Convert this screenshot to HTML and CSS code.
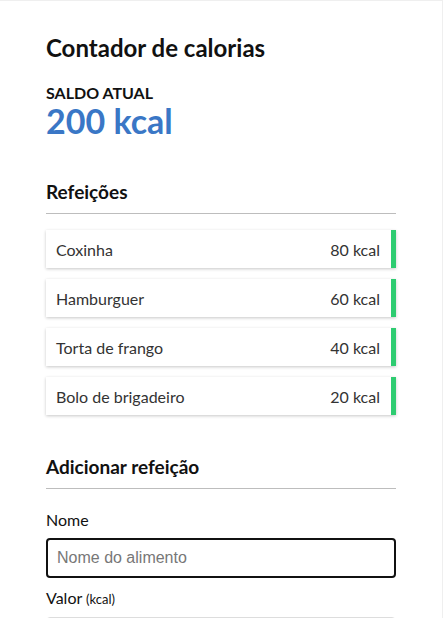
FILE: index.html
```html
<!DOCTYPE html>
<html lang="pt-BR">
<head>
<meta charset="utf-8">
<title>Contador de calorias</title>
<link rel="stylesheet" href="styles.css">
</head>
<body>
<div class="page">
  <h1 class="title">Contador de calorias</h1>
  <div class="balance">
    <div class="balance-label">SALDO ATUAL</div>
    <div class="balance-value">200 kcal</div>
  </div>
  <h2 class="section-title">Refeições</h2>
  <ul class="meals">
    <li class="meal"><span>Coxinha</span><span>80 kcal</span></li>
    <li class="meal"><span>Hamburguer</span><span>60 kcal</span></li>
    <li class="meal"><span>Torta de frango</span><span>40 kcal</span></li>
    <li class="meal"><span>Bolo de brigadeiro</span><span>20 kcal</span></li>
  </ul>
  <h2 class="section-title">Adicionar refeição</h2>
  <form class="form">
    <label class="label" for="nome">Nome</label>
    <input class="input input-focus" id="nome" type="text" placeholder="Nome do alimento">
    <label class="label" for="valor">Valor <small>(kcal)</small></label>
    <input class="input input-plain" id="valor" type="number">
  </form>
</div>
</body>
</html>
```
FILE: styles.css
```css
html, body {
  margin: 0;
  padding: 0;
  background: #fff;
}
body {
  font-family: Lato, "Liberation Sans", sans-serif;
  color: #111;
  height: 618px;
  overflow: hidden;
  box-sizing: border-box;
  border-top: 1px solid #efefef;
  border-right: 1px solid #efefef;
}
.page {
  padding: 32px 46px 0 46px;
  display: flex;
  flex-direction: column;
}
.title {
  margin: 0;
  font-size: 24px;
  font-weight: 700;
  line-height: 30px;
}
.balance {
  margin-top: 20px;
}
.balance-label {
  font-size: 16px;
  font-weight: 700;
  line-height: 19px;
}
.balance-value {
  margin-top: 2px;
  font-size: 34px;
  font-weight: 700;
  color: #3a77c6;
  line-height: 34px;
}
.section-title {
  margin: 42px 0 0 0;
  font-size: 19px;
  font-weight: 700;
  line-height: 23px;
  padding-bottom: 10px;
  border-bottom: 1px solid #bdbdbd;
}
.meals {
  list-style: none;
  margin: 16px 0 0 0;
  padding: 0;
  display: flex;
  flex-direction: column;
  gap: 11px;
}
.meal {
  height: 38px;
  box-sizing: border-box;
  display: flex;
  align-items: center;
  justify-content: space-between;
  padding: 0 11px 0 10px;
  border-right: 5px solid #2ecc71;
  box-shadow: 0 1px 3px rgba(0,0,0,0.22);
  font-size: 16px;
  color: #333;
  background: #fff;
}
.meals + .section-title {
  margin-top: 40px;
}
.form {
  display: flex;
  flex-direction: column;
  margin-top: 21px;
}
.label {
  font-size: 16px;
  line-height: 20px;
  color: #111;
}
.label small {
  font-size: 13px;
}
.input {
  box-sizing: border-box;
  height: 40px;
  margin: 8px 0 10px;
  padding: 0 9px;
  border: 1px solid #ccc;
  border-radius: 4px;
  font-family: "Liberation Sans", Arial, sans-serif;
  font-size: 16px;
  width: 100%;
}
.input::placeholder {
  color: #777;
}
.input-focus {
  border: 2px solid #111;
  outline: none;
}
.input-plain {
  border-color: #ddd;
}
```
